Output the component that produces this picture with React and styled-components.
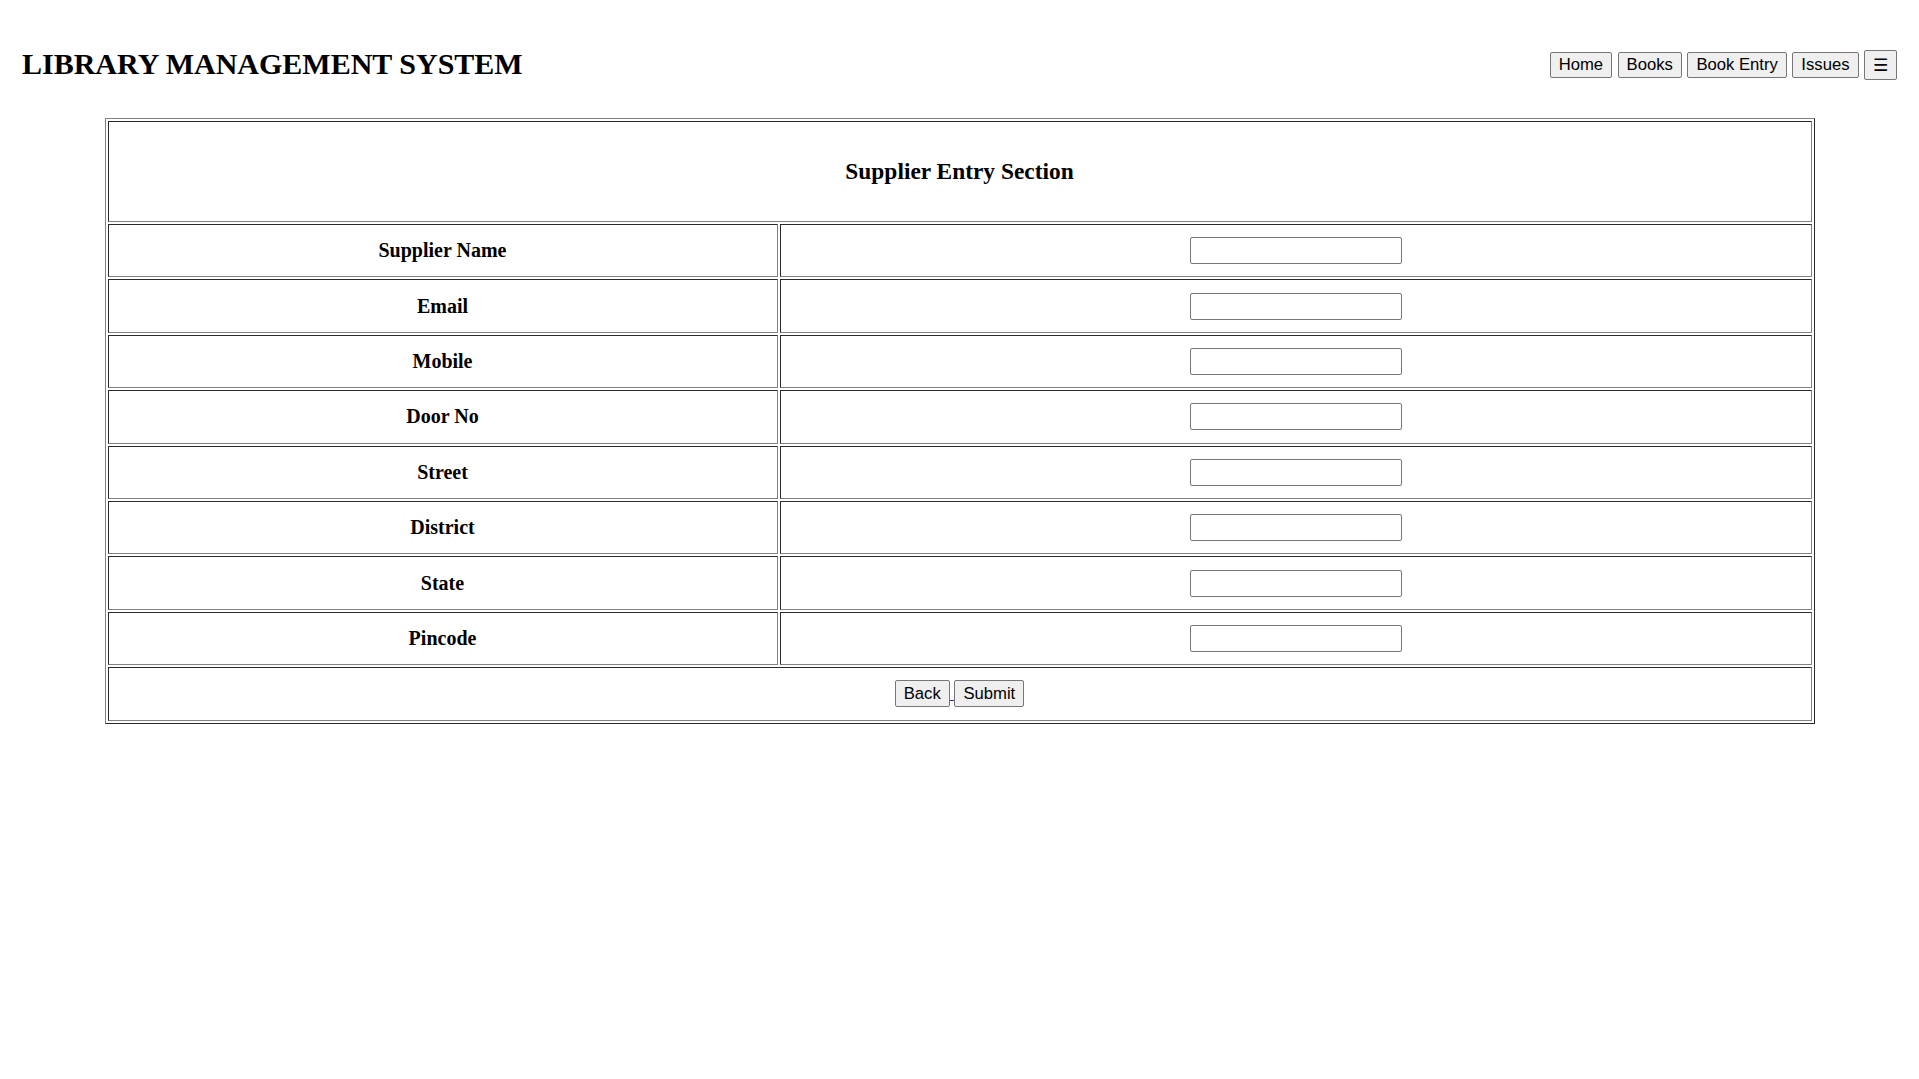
import React from "react";
import styled, { createGlobalStyle } from "styled-components";

const GlobalStyle = createGlobalStyle`
  html, body {
    margin: 0;
    padding: 0;
    background: #ffffff;
  }
  body {
    font-family: "Liberation Serif", "Times New Roman", serif;
    color: #000;
  }
`;

const fields = [
  "Supplier Name",
  "Email",
  "Mobile",
  "Door No",
  "Street",
  "District",
  "State",
  "Pincode"
];

const navItems = ["Home", "Books", "Book Entry", "Issues"];

const App = () => {
  return (
    <Page>
      <GlobalStyle />
      <Header>
        <Title>LIBRARY MANAGEMENT SYSTEM</Title>
        <Nav>
          {navItems.map(item => (
            <NavButton key={item}>{item}</NavButton>
          ))}
          <MenuButton>☰</MenuButton>
        </Nav>
      </Header>

      <FormTable>
        <tbody>
          <tr>
            <HeadCell colSpan={2}>Supplier Entry Section</HeadCell>
          </tr>
          {fields.map(field => (
            <tr key={field}>
              <LabelCell>{field}</LabelCell>
              <InputCell>
                <TextInput type="text" />
              </InputCell>
            </tr>
          ))}
          <tr>
            <ActionCell colSpan={2}>
              <BackLink href="#">
                <FormButton type="button">Back</FormButton>{" "}
              </BackLink>
              <FormButton type="submit">Submit</FormButton>
            </ActionCell>
          </tr>
        </tbody>
      </FormTable>
    </Page>
  );
};

const Page = styled.div`
  padding-top: 40px;
`;

const Header = styled.header`
  display: flex;
  align-items: center;
  justify-content: space-between;
  height: 48px;
  padding: 0 22px;
`;

const Title = styled.h1`
  margin: 0;
  font-family: "Liberation Serif", "Times New Roman", serif;
  font-size: 30px;
  font-weight: bold;
  line-height: 30px;
`;

const Nav = styled.nav`
  display: flex;
  align-items: center;
  gap: 5.5px;
  margin-top: 2px;
`;

const NavButton = styled.button`
  height: 26px;
  padding: 0 8px;
  font-family: "Liberation Sans", Arial, sans-serif;
  font-size: 16.67px;
  color: #000;
  background: #efefef;
  border: 1px solid #767676;
  border-radius: 2px;
  cursor: pointer;
`;

const MenuButton = styled(NavButton)`
  width: 33px;
  height: 30px;
  padding: 0;
  font-family: "DejaVu Sans", sans-serif;
  font-size: 17px;
`;

const FormTable = styled.table`
  width: 1710px;
  margin: 30px auto 0;
  border-collapse: separate;
  border-spacing: 2px;
  border: 1px solid;
  border-color: #808080 #2a2a2a #2a2a2a #808080;
`;

const Cell = styled.td`
  box-sizing: border-box;
  padding: 1px;
  border: 1px solid;
  border-color: #2a2a2a #808080 #808080 #2a2a2a;
  text-align: center;
  vertical-align: middle;
  height: 53.4px;
`;

const HeadCell = styled(Cell).attrs({ as: "th" })`
  height: 101px;
  font-size: 23.4px;
  font-weight: bold;
`;

const LabelCell = styled(Cell).attrs({ as: "th" })`
  width: 670px;
  font-size: 20px;
  font-weight: bold;
`;

const InputCell = styled(Cell)``;

const TextInput = styled.input`
  box-sizing: border-box;
  display: inline-block;
  width: 212px;
  height: 27px;
  padding: 1px 3px;
  font-family: "Liberation Sans", Arial, sans-serif;
  font-size: 16px;
  border: 1px solid #767676;
  border-radius: 2px;
  background: #fff;
  vertical-align: middle;
`;

const ActionCell = styled(Cell)`
  font-family: "Liberation Sans", Arial, sans-serif;
  font-size: 16.67px;
`;

const BackLink = styled.a`
  color: #551a8b;
  text-decoration: underline;
`;

const FormButton = styled.button`
  height: 27px;
  padding: 0 8px;
  font-family: "Liberation Sans", Arial, sans-serif;
  font-size: 16.67px;
  color: #000;
  background: #efefef;
  border: 1px solid #767676;
  border-radius: 2px;
  cursor: pointer;
`;

export default App;
